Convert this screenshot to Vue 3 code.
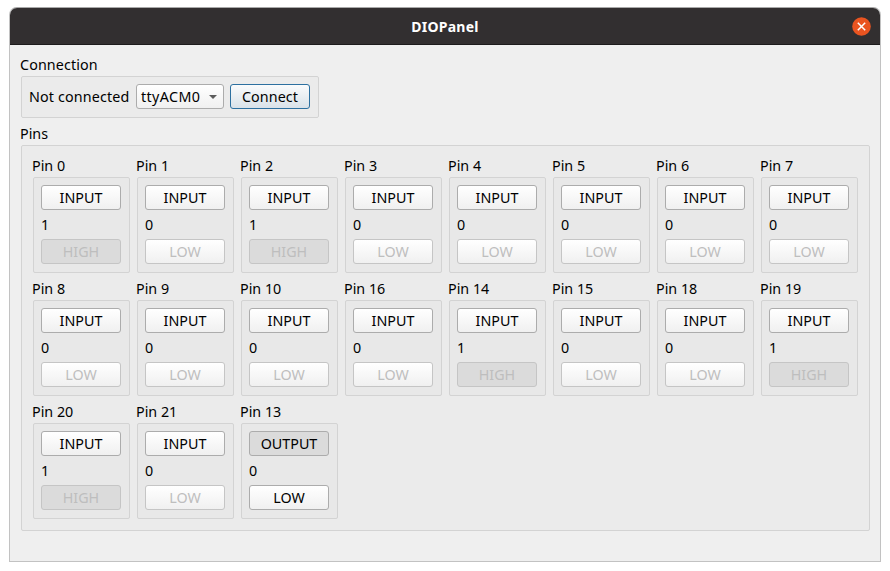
<script setup>
const pins = [
  [0, 1], [1, 0], [2, 1], [3, 0], [4, 0], [5, 0], [6, 0], [7, 0],
  [8, 0], [9, 0], [10, 0], [16, 0], [14, 1], [15, 0], [18, 0], [19, 1],
  [20, 1], [21, 0], [13, 0, true],
].map(([id, value, output = false]) => ({ id, value, output }))
</script>

<template>
  <div class="window">
    <header class="titlebar">
      <h1>DIOPanel</h1>
      <button class="close" aria-label="Close">
        <svg width="19" height="19" viewBox="0 0 19 19">
          <circle cx="9.5" cy="9.5" r="9.3" fill="#e95420" />
          <path d="M5.8 5.8 13.2 13.2M13.2 5.8 5.8 13.2" stroke="#fff" stroke-width="1.5" />
        </svg>
      </button>
    </header>
    <main class="content">
      <div class="label section-label">Connection</div>
      <section class="group connection">
        <span class="status">Not connected</span>
        <button class="btn combo">
          <span>ttyACM0</span>
          <svg width="8" height="4" viewBox="0 0 8 4"><path d="M0 0H8L4 4Z" fill="#5c5c5c" /></svg>
        </button>
        <button class="btn primary">Connect</button>
      </section>
      <div class="label pins-label">Pins</div>
      <section class="group pins">
        <div v-for="pin in pins" :key="pin.id" class="pin">
          <div class="pin-label">Pin {{ pin.id }}</div>
          <div class="group pin-box">
            <button class="btn" :class="{ down: pin.output }">{{ pin.output ? 'OUTPUT' : 'INPUT' }}</button>
            <div class="value">{{ pin.value }}</div>
            <button class="btn" :class="{ down: pin.value }" :disabled="!pin.output">{{ pin.value ? 'HIGH' : 'LOW' }}</button>
          </div>
        </div>
      </section>
    </main>
  </div>
</template>

<style>
body {
  background: #fff;
}
</style>

<style scoped>
* {
  box-sizing: border-box;
}
.window {
  width: 872px;
  height: 555px;
  margin: 7px 0 0 9px;
  border: 1px solid #c2c2c2;
  border-top-color: #a9a9a9;
  border-radius: 8px 8px 0 0;
  background: #efefef;
  overflow: hidden;
  color: #000;
  font: 14.3px/20px "Noto Sans", sans-serif;
  white-space: nowrap;
}
.titlebar {
  display: grid;
  grid-template-columns: 1fr auto 1fr;
  align-items: center;
  height: 37px;
  background: #322f30;
  border-bottom: 1px solid #1d1b1c;
}
h1 {
  grid-column: 2;
  margin: 0;
  padding-top: 2px;
  color: #fff;
  font-size: 14px;
  font-weight: 700;
  line-height: 20px;
  letter-spacing: 0.25px;
}
.close {
  justify-self: end;
  width: 19px;
  height: 19px;
  margin-right: 9px;
  padding: 0;
  border: 0;
  background: none;
}
.close svg {
  display: block;
}
.content {
  padding: 10px 10px 0 11px;
}
.label {
  height: 21px;
  margin-left: -1px;
}
.section-label {
  letter-spacing: 0.1px;
}
.group {
  border: 1px solid #d3d3d3;
  border-radius: 2px;
  background: #ebebeb;
}
.connection {
  display: flex;
  width: 298px;
  height: 42px;
  padding: 7px;
}
.status {
  width: 107px;
  line-height: 25px;
  letter-spacing: 0.15px;
}
.btn {
  display: flex;
  align-items: center;
  justify-content: center;
  width: 80px;
  height: 25px;
  padding: 0;
  border: 1px solid #acacac;
  border-radius: 3px;
  background: linear-gradient(#fff, #f0f0f0);
  color: #000;
  font: inherit;
}
.combo {
  justify-content: space-between;
  width: 88px;
  margin-right: 6px;
  padding: 0 6px 0 4px;
  letter-spacing: 0.4px;
}
.primary {
  border-color: #2d70a0;
  background: linear-gradient(#fafbfc, #d9e2e9);
  letter-spacing: 0.1px;
}
.pins-label {
  margin-top: 6px;
}
.pins {
  display: grid;
  grid-template-columns: repeat(8, 97px);
  gap: 6px 7px;
  width: 849px;
  height: 386px;
  padding: 10px 11px 11px;
  align-content: start;
}
.pin-label {
  height: 21px;
  margin-left: -1px;
}
.pin-box {
  height: 96px;
  padding: 7px;
  background: #e8e8e8;
}
.value {
  height: 29px;
  line-height: 29px;
}
.down {
  background: #dbdbdb;
}
.btn:disabled {
  border-color: #c5c5c5;
  color: #bebebe;
}
</style>
